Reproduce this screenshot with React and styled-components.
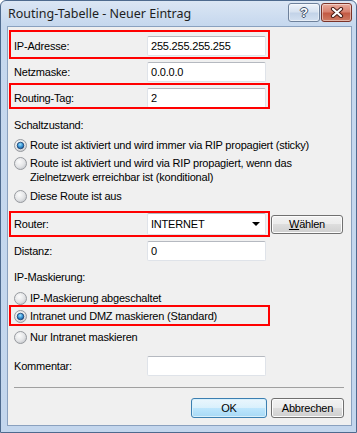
import React from "react";
import styled, { createGlobalStyle } from "styled-components";

const GlobalStyle = createGlobalStyle`
  html, body { margin: 0; padding: 0; background: #ffffff; }
  body { font-family: "Liberation Sans", Arial, sans-serif; }
`;

const Window = styled.div`
  width: 357px;
  height: 433px;
  box-sizing: border-box;
  display: flex;
  flex-direction: column;
  border: 1px solid #4e6a8e;
  border-radius: 6px 6px 0 0;
  background: linear-gradient(#dbe6f4 0, #c6d8ee 24px, #c3d6ed 100%);
`;

const TitleBar = styled.div`
  height: 25px;
  display: flex;
  align-items: flex-start;
  padding: 0 4px 0 7px;
`;

const Title = styled.span`
  font: 12.5px "Noto Sans", "Liberation Sans", sans-serif;
  color: #1e1e1e;
  line-height: 26px;
  flex: 1;
`;

const CaptionButton = styled.button`
  width: ${(p) => p.$w}px;
  height: 19px;
  margin: 2px 0 0 ${(p) => p.$ml}px;
  padding: 0;
  border: 1px solid ${(p) => (p.$danger ? "#7b3328" : "#6e819b")};
  border-radius: 3px;
  display: flex;
  align-items: center;
  justify-content: center;
  box-shadow: inset 0 0 0 1px rgba(255, 255, 255, 0.45);
  background: ${(p) =>
    p.$danger
      ? "linear-gradient(#e9ab9c 0, #d88270 45%, #c35a44 55%, #cf7c64 100%)"
      : "linear-gradient(#eef3fa 0, #d7e2f0 45%, #c3d3e8 55%, #d3e0f0 100%)"};
`;

const HelpGlyph = styled.span`
  font: bold 13px "Liberation Sans", sans-serif;
  color: #ffffff;
  text-shadow: 1px 0 #3d4f68, -1px 0 #3d4f68, 0 1px #3d4f68, 0 -1px #3d4f68;
  line-height: 1;
`;

const Client = styled.div`
  flex: 1;
  margin: 0 4px 6px 6px;
  border: 1px solid #8aa1bf;
  background: #f0f0f0;
  padding: 0 7px 0 6px;
  display: flex;
  flex-direction: column;
  font-size: 11px;
  letter-spacing: -0.2px;
  color: #000;
`;

const Field = styled.div`
  position: relative;
  display: flex;
  align-items: center;
  width: 252px;
  height: ${(p) => p.$h || 20}px;
  margin-top: ${(p) => p.$mt || 0}px;
`;

const Marked = styled.div`
  position: relative;
  width: 252px;
  margin-top: ${(p) => p.$mt || 0}px;
  &::after {
    content: "";
    position: absolute;
    top: ${(p) => -p.$t}px;
    bottom: ${(p) => -p.$b}px;
    left: -5px;
    right: -4px;
    border: 2px solid #ff0000;
    pointer-events: none;
  }
`;

const Label = styled.span`
  width: 133px;
  flex: none;
`;

const TextBox = styled.div`
  width: 119px;
  height: 100%;
  box-sizing: border-box;
  border: 1px solid #dfe3e9;
  border-top-color: #b5b9c0;
  border-radius: 2px;
  background: #fff;
  padding: 0 3px;
  display: flex;
  align-items: center;
  justify-content: space-between;
`;

const Arrow = styled.span`
  width: 0;
  height: 0;
  border-left: 4px solid transparent;
  border-right: 4px solid transparent;
  border-top: 4px solid #000;
  margin-right: 2px;
`;

const Caption = styled.div`
  height: 14px;
  line-height: 14px;
  margin-top: ${(p) => p.$mt}px;
`;

const RadioRow = styled.div`
  display: flex;
  align-items: flex-start;
  gap: 3px;
  line-height: 14px;
  width: ${(p) => p.$w || 320}px;
  margin-top: ${(p) => p.$mt || 0}px;
`;

const RadioIcon = styled.svg`
  flex: none;
  width: 13px;
  height: 13px;
  margin-top: 1px;
`;

const Radio = ({ checked, children, mt, w }) => (
  <RadioRow $mt={mt} $w={w}>
    <RadioIcon viewBox="0 0 13 13">
      <defs>
        <radialGradient id="rfill" cx="0.4" cy="0.35" r="0.7">
          <stop offset="0" stopColor="#fbfbfb" />
          <stop offset="0.6" stopColor="#e4e5e7" />
          <stop offset="1" stopColor="#c4c7cc" />
        </radialGradient>
        <radialGradient id="rdot" cx="0.45" cy="0.35" r="0.7">
          <stop offset="0" stopColor="#9fe0fb" />
          <stop offset="0.5" stopColor="#3c98d8" />
          <stop offset="1" stopColor="#0e4b8c" />
        </radialGradient>
      </defs>
      <circle cx="6.5" cy="6.5" r="6" fill="url(#rfill)" stroke="#979a9f" />
      {checked && (
        <circle cx="6.5" cy="6.5" r="3.3" fill="url(#rdot)" stroke="#1b3f6d" strokeWidth="0.8" />
      )}
    </RadioIcon>
    <span>{children}</span>
  </RadioRow>
);

const RouterLine = styled.div`
  display: flex;
  align-items: center;
  margin-top: 10px;
`;

const Button = styled.button`
  width: ${(p) => p.$w}px;
  height: ${(p) => p.$h || 20}px;
  margin-left: ${(p) => p.$ml || 0}px;
  padding: 0;
  font: 11px "Liberation Sans", Arial, sans-serif;
  letter-spacing: -0.2px;
  color: #000;
  border-radius: 3px;
  border: 1px solid ${(p) => (p.$primary ? "#3c7fb1" : "#707070")};
  box-shadow: inset 0 0 0 1px ${(p) => (p.$primary ? "#d8f0fc" : "#fcfcfc")};
  background: ${(p) =>
    p.$primary
      ? "linear-gradient(#eaf6fd 0, #d9f0fc 50%, #bee6fd 50%, #a7d9f5 100%)"
      : "linear-gradient(#f2f2f2 0, #ebebeb 50%, #dddddd 50%, #cfcfcf 100%)"};
  u { text-decoration: underline; }
`;

const Separator = styled.div`
  height: 1px;
  background: #a0a0a0;
  margin-top: 11px;
`;

const ButtonBar = styled.div`
  display: flex;
  justify-content: flex-end;
  gap: 4px;
  margin-top: 10px;
`;

export default function App() {
  return (
    <>
      <GlobalStyle />
      <Window>
        <TitleBar>
          <Title>Routing-Tabelle - Neuer Eintrag</Title>
          <CaptionButton $w={32} $ml={0}>
            <HelpGlyph>?</HelpGlyph>
          </CaptionButton>
          <CaptionButton $w={31} $ml={1} $danger>
            <svg width="14" height="11" viewBox="0 0 14 11">
              <path d="M3 2 L11 9 M11 2 L3 9" stroke="#4a1d16" strokeWidth="4.2" strokeLinecap="round" />
              <path d="M3 2 L11 9 M11 2 L3 9" stroke="#ffffff" strokeWidth="2.2" strokeLinecap="round" />
            </svg>
          </CaptionButton>
        </TitleBar>
        <Client>
          <Marked $mt={9} $t={6} $b={3}>
            <Field>
              <Label>IP-Adresse:</Label>
              <TextBox>255.255.255.255</TextBox>
            </Field>
          </Marked>
          <Field $mt={6}>
            <Label>Netzmaske:</Label>
            <TextBox>0.0.0.0</TextBox>
          </Field>
          <Marked $mt={6} $t={5} $b={1}>
            <Field>
              <Label>Routing-Tag:</Label>
              <TextBox>2</TextBox>
            </Field>
          </Marked>
          <Caption $mt={10}>Schaltzustand:</Caption>
          <Radio mt={6} checked>
            Route ist aktiviert und wird immer via RIP propagiert (sticky)
          </Radio>
          <Radio mt={4}>
            Route ist aktiviert und wird via RIP propagiert, wenn das Zielnetzwerk erreichbar ist (konditional)
          </Radio>
          <Radio mt={5}>Diese Route ist aus</Radio>
          <RouterLine>
            <Marked $t={2} $b={2}>
              <Field $h={22}>
                <Label>Router:</Label>
                <TextBox>
                  INTERNET
                  <Arrow />
                </TextBox>
              </Field>
            </Marked>
            <Button $w={72} $h={19} $ml={5}>
              <u>W</u>ählen
            </Button>
          </RouterLine>
          <Field $mt={6}>
            <Label>Distanz:</Label>
            <TextBox>0</TextBox>
          </Field>
          <Caption $mt={9}>IP-Maskierung:</Caption>
          <Radio mt={7}>IP-Maskierung abgeschaltet</Radio>
          <Marked $mt={4} $t={4} $b={3}>
            <Radio checked w={252}>Intranet und DMZ maskieren (Standard)</Radio>
          </Marked>
          <Radio mt={7}>Nur Intranet maskieren</Radio>
          <Field $mt={12}>
            <Label>Kommentar:</Label>
            <TextBox />
          </Field>
          <Separator />
          <ButtonBar>
            <Button $w={76} $primary>OK</Button>
            <Button $w={73}>Abbrechen</Button>
          </ButtonBar>
        </Client>
      </Window>
    </>
  );
}
